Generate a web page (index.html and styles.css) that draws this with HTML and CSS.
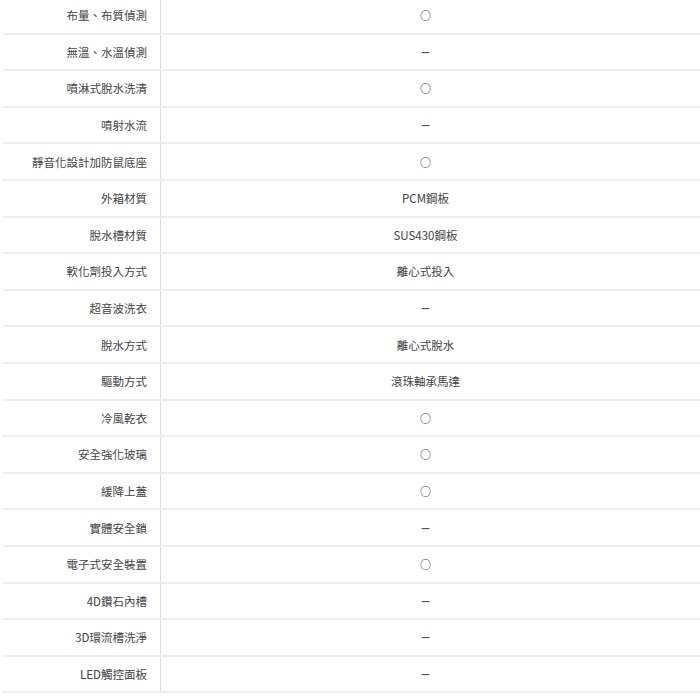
FILE: index.html
```html
<!DOCTYPE html>
<html lang="zh-Hant">
<head>
<meta charset="utf-8">
<link rel="stylesheet" href="styles.css">
</head>
<body>
<div class="spec">
  <div class="row"><div class="label">布量、布質偵測</div><div class="value"><span class="mark">○</span></div></div>
  <div class="row"><div class="label">無溫、水溫偵測</div><div class="value"><span class="dash">－</span></div></div>
  <div class="row"><div class="label">噴淋式脫水洗清</div><div class="value"><span class="mark">○</span></div></div>
  <div class="row"><div class="label">噴射水流</div><div class="value"><span class="dash">－</span></div></div>
  <div class="row"><div class="label">靜音化設計加防鼠底座</div><div class="value"><span class="mark">○</span></div></div>
  <div class="row"><div class="label">外箱材質</div><div class="value">PCM鋼板</div></div>
  <div class="row"><div class="label">脫水槽材質</div><div class="value">SUS430鋼板</div></div>
  <div class="row"><div class="label">軟化劑投入方式</div><div class="value">離心式投入</div></div>
  <div class="row"><div class="label">超音波洗衣</div><div class="value"><span class="dash">－</span></div></div>
  <div class="row"><div class="label">脫水方式</div><div class="value">離心式脫水</div></div>
  <div class="row"><div class="label">驅動方式</div><div class="value">滾珠軸承馬達</div></div>
  <div class="row"><div class="label">冷風乾衣</div><div class="value"><span class="mark">○</span></div></div>
  <div class="row"><div class="label">安全強化玻璃</div><div class="value"><span class="mark">○</span></div></div>
  <div class="row"><div class="label">緩降上蓋</div><div class="value"><span class="mark">○</span></div></div>
  <div class="row"><div class="label">實體安全鎖</div><div class="value"><span class="dash">－</span></div></div>
  <div class="row"><div class="label">電子式安全裝置</div><div class="value"><span class="mark">○</span></div></div>
  <div class="row"><div class="label">4D鑽石內槽</div><div class="value"><span class="dash">－</span></div></div>
  <div class="row"><div class="label">3D環流槽洗淨</div><div class="value"><span class="dash">－</span></div></div>
  <div class="row"><div class="label">LED觸控面板</div><div class="value"><span class="dash">－</span></div></div>
</div>
</body>
</html>
```

FILE: styles.css
```css
html, body {
  margin: 0;
  padding: 0;
  background: #fff;
}
body {
  font-family: "Noto Sans CJK TC", "Noto Sans", sans-serif;
  font-size: 11.5px;
  color: #444;
}
.spec {
  margin-top: -2px;
  margin-left: 3px;
  display: flex;
  flex-direction: column;
}
.row {
  display: flex;
  height: 36.6px;
  box-sizing: border-box;
  border-bottom: 2px solid #eeeeee;
}
.label {
  width: 158px;
  box-sizing: border-box;
  padding-right: 13px;
  border-right: 1px solid #dddddd;
  display: flex;
  align-items: center;
  justify-content: flex-end;
}
.value {
  flex: 1;
  padding-right: 10px;
  display: flex;
  align-items: center;
  justify-content: center;
}
.mark {
  font-size: 11px;
  font-weight: bold;
  color: #444;
}
.dash {
  font-size: 11px;
  font-weight: bold;
  color: #555;
}
```
